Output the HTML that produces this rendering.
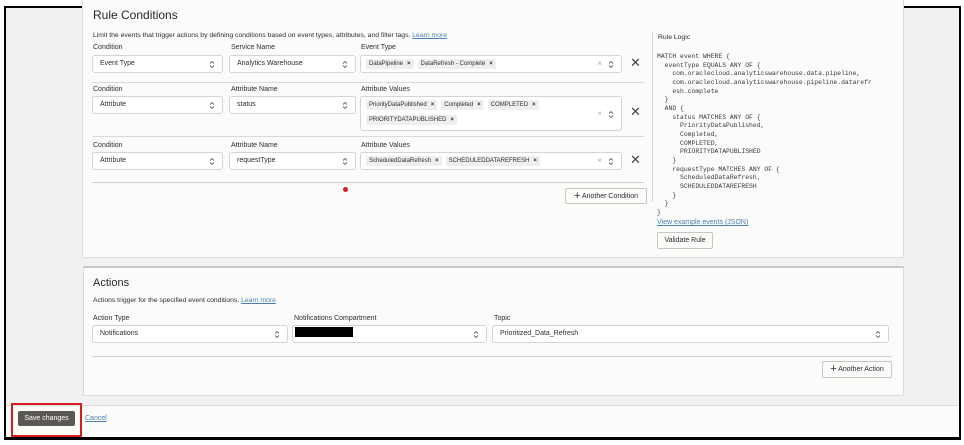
<!DOCTYPE html>
<html><head><meta charset="utf-8"><style>
*{box-sizing:border-box;margin:0;padding:0}
body{width:964px;height:445px;background:#fff;font-family:"Liberation Sans",sans-serif;color:#2f2d2b;position:relative;overflow:hidden;font-size:7px}
.a{position:absolute;white-space:nowrap}
#frame{position:absolute;left:4px;top:6px;width:957px;height:434px;border:2px solid #000;border-bottom-width:3px;background:#f2f1ef;overflow:hidden}
.panel{position:absolute;background:#fbfbfa;border:1px solid #dedcda}
.sel{position:absolute;height:18px;border:1px solid #d6d4d2;border-radius:3px;background:#fff;padding:0 7px;line-height:16px;font-size:7px}
.sel svg.ar{position:absolute;right:7px;top:4px}
.sel .cx{position:absolute;right:19px;top:0;color:#aaa;font-size:8px;line-height:16px}
.lbl{position:absolute;font-size:7px;color:#2f2d2b}
.chip{display:inline-block;background:#f0efed;padding:0 3px;margin-right:4px;font-size:6px;line-height:10px}
.chip b{font-size:6px;margin-left:4px}
.x{position:absolute;font-size:13px;color:#444}
.btn{position:absolute;border:1px solid #c8c6c3;border-radius:2px;background:#fbfbfa;font-size:7px;line-height:14px;text-align:center}
.line{position:absolute;height:1px;background:#dcdad8}
a{color:#4a7fb5;text-decoration:underline}
pre{font-family:"Liberation Mono",monospace;font-size:6.4px;line-height:8.65px;color:#3a3836;white-space:pre!important}
</style></head><body>
<svg width="0" height="0" style="position:absolute"><defs><symbol id="ud" viewBox="0 0 6 9"><path d="M1 3.5L3 1.5L5 3.5M1 5.5L3 7.5L5 5.5" fill="none" stroke="#666" stroke-width="0.9"/></symbol></defs></svg>
<div id="frame"></div>
<div class="panel" style="left:82px;top:-2px;width:822px;height:260px"></div>
<div class="a" style="left:93px;top:8px;font-size:12px;color:#2a2826">Rule Conditions</div>
<div class="a" style="left:93px;top:32px;font-size:6.8px">Limit the events that trigger actions by defining conditions based on event types, attributes, and filter tags. <a>Learn more</a></div>

<div class="lbl" style="left:93px;top:44px">Condition</div>
<div class="lbl" style="left:231px;top:44px">Service Name</div>
<div class="lbl" style="left:361px;top:44px">Event Type</div>
<div class="sel" style="left:92px;top:55px;width:131px">Event Type<svg class="ar" width="6" height="9"><use href="#ud"/></svg></div>
<div class="sel" style="left:229px;top:55px;width:127px">Analytics Warehouse<svg class="ar" width="6" height="9"><use href="#ud"/></svg></div>
<div class="sel" style="left:360px;top:55px;width:262px;padding:3px 5px;line-height:10px"><span class="chip">DataPipeline<b>×</b></span><span class="chip">DataRefresh - Complete<b>×</b></span><span class="cx">×</span><svg class="ar" width="6" height="9"><use href="#ud"/></svg></div>
<div class="x" style="left:630px;top:55px">✕</div>
<div class="line" style="left:92px;top:82px;width:552px"></div>

<div class="lbl" style="left:93px;top:86px">Condition</div>
<div class="lbl" style="left:231px;top:86px">Attribute Name</div>
<div class="lbl" style="left:361px;top:86px">Attribute Values</div>
<div class="sel" style="left:92px;top:96px;width:131px">Attribute<svg class="ar" width="6" height="9"><use href="#ud"/></svg></div>
<div class="sel" style="left:229px;top:96px;width:127px">status<svg class="ar" width="6" height="9"><use href="#ud"/></svg></div>
<div class="sel" style="left:360px;top:96px;width:262px;height:35px;padding:3px 5px;line-height:10px;white-space:normal"><span class="chip">PriorityDataPublished<b>×</b></span><span class="chip">Completed<b>×</b></span><span class="chip">COMPLETED<b>×</b></span><br><span class="chip" style="margin-top:5px">PRIORITYDATAPUBLISHED<b>×</b></span><span class="cx" style="top:9px">×</span><svg class="ar" width="6" height="9" style="top:13px"><use href="#ud"/></svg></div>
<div class="x" style="left:630px;top:104px">✕</div>
<div class="line" style="left:92px;top:136px;width:552px"></div>

<div class="lbl" style="left:93px;top:142px">Condition</div>
<div class="lbl" style="left:231px;top:142px">Attribute Name</div>
<div class="lbl" style="left:361px;top:142px">Attribute Values</div>
<div class="sel" style="left:92px;top:152px;width:131px">Attribute<svg class="ar" width="6" height="9"><use href="#ud"/></svg></div>
<div class="sel" style="left:229px;top:152px;width:127px">requestType<svg class="ar" width="6" height="9"><use href="#ud"/></svg></div>
<div class="sel" style="left:360px;top:152px;width:262px;padding:3px 5px;line-height:10px"><span class="chip">ScheduledDataRefresh<b>×</b></span><span class="chip">SCHEDULEDDATAREFRESH<b>×</b></span><span class="cx">×</span><svg class="ar" width="6" height="9"><use href="#ud"/></svg></div>
<div class="x" style="left:630px;top:152px">✕</div>
<div class="line" style="left:92px;top:182px;width:552px;background:#d0cecc"></div>
<div class="a" style="left:343px;top:187px;width:5px;height:5px;border-radius:50%;background:#d61f1f"></div>
<div class="btn" style="left:565px;top:188px;width:82px;height:16px"><span style="font-size:11px;vertical-align:-1px">+</span> Another Condition</div>

<div class="a" style="left:652px;top:32px;width:1px;height:170px;background:#dcdad8"></div>
<div class="a" style="left:658px;top:34px;font-size:6.8px">Rule Logic</div>
<pre class="a" style="left:657px;top:53px">MATCH event WHERE {
  eventType EQUALS ANY OF {
    com.oraclecloud.analyticswarehouse.data.pipeline,
    com.oraclecloud.analyticswarehouse.pipeline.datarefr
    esh.complete
  }
  AND {
    status MATCHES ANY OF {
      PriorityDataPublished,
      Completed,
      COMPLETED,
      PRIORITYDATAPUBLISHED
    }
    requestType MATCHES ANY OF {
      ScheduledDataRefresh,
      SCHEDULEDDATAREFRESH
    }
  }
}</pre>
<div class="a" style="left:657px;top:219px;font-size:7px"><a>View example events (JSON)</a></div>
<div class="btn" style="left:657px;top:232px;width:56px;height:17px;line-height:15px">Validate Rule</div>

<div class="panel" style="left:83px;top:266px;width:821px;height:130px;border-top:2px solid #c9c7c5"></div>
<div class="a" style="left:93px;top:277px;font-size:11px;color:#2a2826">Actions</div>
<div class="a" style="left:93px;top:297px;font-size:6.8px">Actions trigger for the specified event conditions. <a>Learn more</a></div>
<div class="lbl" style="left:93px;top:315px">Action Type</div>
<div class="lbl" style="left:294px;top:315px">Notifications Compartment</div>
<div class="lbl" style="left:494px;top:315px">Topic</div>
<div class="sel" style="left:92px;top:325px;width:196px">Notifications<svg class="ar" width="6" height="9"><use href="#ud"/></svg></div>
<div class="sel" style="left:292px;top:325px;width:195px"><span style="display:inline-block;width:58px;height:10px;background:#000;vertical-align:-2px;margin-left:-5px"></span><svg class="ar" width="6" height="9"><use href="#ud"/></svg></div>
<div class="sel" style="left:492px;top:325px;width:397px">Prioritized_Data_Refresh<svg class="ar" width="6" height="9"><use href="#ud"/></svg></div>
<div class="line" style="left:92px;top:356px;width:800px;background:#d0cecc"></div>
<div class="btn" style="left:822px;top:361px;width:70px;height:17px;line-height:15px"><span style="font-size:11px;vertical-align:-1px">+</span> Another Action</div>

<div class="a" style="left:6px;top:405px;width:953px;height:32px;background:#fbfbfa;border-top:1px solid #dcdad8"></div>
<div class="a" style="left:11px;top:403px;width:71px;height:34px;border:2px solid #d51c24"></div>
<div class="a" style="left:18px;top:411px;width:57px;height:15px;background:#5b5754;color:#fff;border-radius:2px;font-size:7px;line-height:15px;text-align:center">Save changes</div>
<div class="a" style="left:85px;top:415px;font-size:7px"><a>Cancel</a></div>
</body></html>
